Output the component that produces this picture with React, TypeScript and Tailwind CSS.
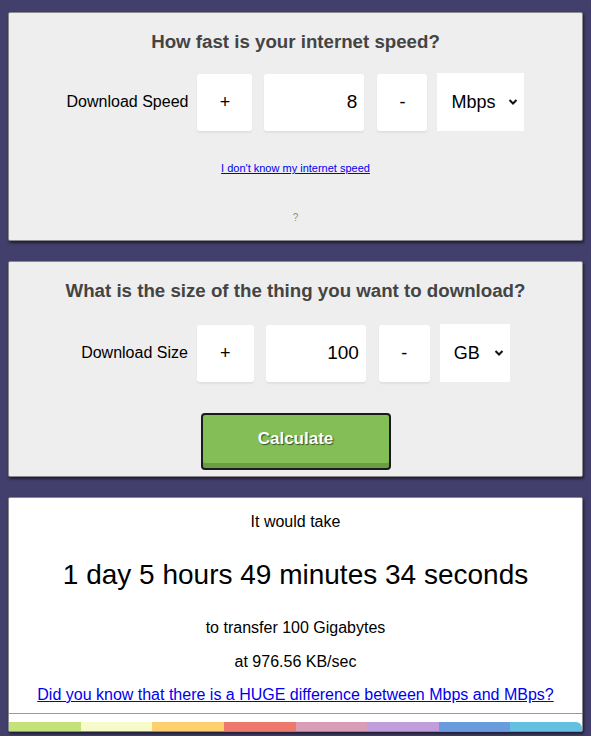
import React from "react";

const Stepper = ({
  label,
  value,
  unit,
  widths,
}: {
  label: string;
  value: string;
  unit: string;
  widths: { plus: string; input: string; minus: string; select: string };
}) => {
  return (
    <div className="flex items-center justify-center">
      <span className="text-[16px] text-black mr-[9px]">{label}</span>
      <div
        className={`${widths.plus} h-[57px] bg-white rounded-[3px] shadow-[0_2px_2px_rgba(0,0,0,0.06)] flex items-center justify-center text-[18px]`}
      >
        +
      </div>
      <div
        className={`${widths.input} ml-[12px] h-[57px] bg-white rounded-[3px] shadow-[0_2px_2px_rgba(0,0,0,0.06)] flex items-center justify-end pr-[7px] text-[19px]`}
      >
        {value}
      </div>
      <div
        className={`${widths.minus} ml-[13px] h-[57px] bg-white rounded-[3px] shadow-[0_2px_2px_rgba(0,0,0,0.06)] flex items-center justify-center text-[18px]`}
      >
        -
      </div>
      <div
        className={`${widths.select} ml-[10px] h-[58px] bg-white flex items-center justify-between pl-[14px] pr-[6px] text-[18px]`}
      >
        <span>{unit}</span>
        <svg width="10" height="8" viewBox="0 0 10 8" fill="none">
          <path d="M1.5 2l3.5 3.5L8.5 2" stroke="#111" strokeWidth="2" />
        </svg>
      </div>
    </div>
  );
};

const stripes = [
  "bg-[#c5e17a]",
  "bg-[#f7fbc9]",
  "bg-[#fdcf6f]",
  "bg-[#ef786c]",
  "bg-[#d99db8]",
  "bg-[#c29ddc]",
  "bg-[#6a9bde]",
  "bg-[#63c0e0]",
];

export default function App() {
  return (
    <div className="min-h-[736px] bg-[#423f6c] px-[8px] pt-[12px] pb-[4px] font-['Liberation_Sans',Arial,sans-serif] text-black">
      <div className="bg-[#eeeeee] border border-[#8a8a8a] rounded-[2px] shadow-[1px_2px_3px_rgba(0,0,0,0.55)] h-[229px] flex flex-col items-center">
        <h2 className="mt-[15px] text-[18.7px] font-bold text-[#444]">
          How fast is your internet speed?
        </h2>
        <div className="mt-[17px] w-full">
          <Stepper
            label="Download Speed"
            value="8"
            unit="Mbps"
            widths={{ plus: "w-[55px]", input: "w-[100px]", minus: "w-[50px]", select: "w-[87px]" }}
          />
        </div>
        <a href="#" className="mt-[32px] text-[11px] text-[#0000ee] underline leading-none">
          I don't know my internet speed
        </a>
        <span className="mt-[39px] text-[10px] text-[#7a9a7a] leading-none">?</span>
      </div>

      <div className="mt-[20px] bg-[#eeeeee] border border-[#8a8a8a] rounded-[2px] shadow-[1px_2px_3px_rgba(0,0,0,0.55)] h-[216px] flex flex-col items-center">
        <h2 className="mt-[15px] text-[18.7px] font-bold text-[#444]">
          What is the size of the thing you want to download?
        </h2>
        <div className="mt-[19px] w-full">
          <Stepper
            label="Download Size"
            value="100"
            unit="GB"
            widths={{ plus: "w-[57px]", input: "w-[100px]", minus: "w-[51px]", select: "w-[70px]" }}
          />
        </div>
        <button className="mt-[31px] w-[190px] h-[57px] rounded-[4px] border-2 border-[#1a1a1a] bg-[#83bf56] shadow-[inset_0_-5px_0_#6b9d45] text-white font-bold text-[17px] [text-shadow:1px_1px_1px_rgba(0,0,0,0.6)] pb-[5px]">
          Calculate
        </button>
      </div>

      <div className="mt-[20px] bg-white border border-[#8a8a8a] rounded-[2px] shadow-[1px_2px_3px_rgba(0,0,0,0.55)] flex flex-col items-center">
        <p className="mt-[12px] text-[16px]">It would take</p>
        <p className="mt-[20px] text-[28px]">1 day 5 hours 49 minutes 34 seconds</p>
        <p className="mt-[20px] text-[16px]">to transfer 100 Gigabytes</p>
        <p className="mt-[10px] text-[16px]">at 976.56 KB/sec</p>
        <a href="#" className="mt-[9px] text-[16px] text-[#0000ee] underline">
          Did you know that there is a HUGE difference between Mbps and MBps?
        </a>
        <div className="mt-[6px] w-full border-t border-[#999]" />
        <div className="mt-[8px] w-full flex h-[9px] rounded-tr-[6px] overflow-hidden">
          {stripes.map((c) => (
            <div key={c} className={`${c} flex-1`} />
          ))}
        </div>
      </div>
    </div>
  );
}
